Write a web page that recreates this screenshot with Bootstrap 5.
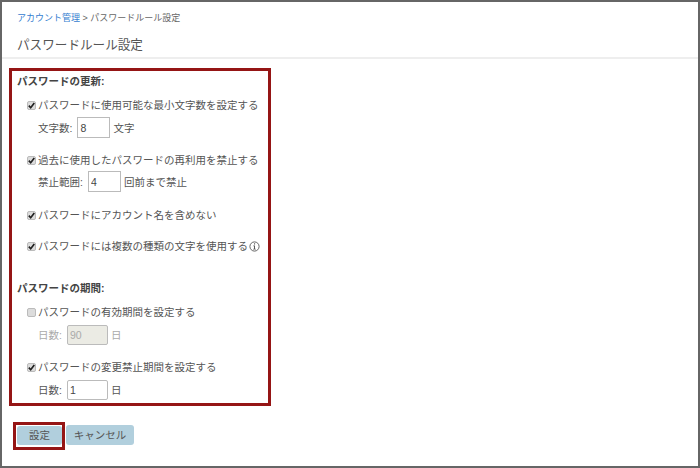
<!DOCTYPE html>
<html lang="ja">
<head>
<meta charset="utf-8">
<title>パスワードルール設定</title>
<link rel="stylesheet" href="https://cdn.jsdelivr.net/npm/bootstrap@5.3.0/dist/css/bootstrap.min.css">
<style>
html,body{height:100%;}
body{font-family:"Liberation Sans","Noto Sans CJK JP",sans-serif;font-size:10.5px;color:#555;background:#fff;}
.frame{height:468px;border:2px solid #666;overflow:hidden;background:#fff;}
.crumbs{padding:9px 0 0 15px;height:32px;font-size:9px;line-height:14px;color:#666;}
.crumbs a{color:#3580d0;text-decoration:none;}
.page-ttl{margin:0;padding:0 0 0 15px;height:23px;font-size:12.6px;line-height:22px;font-weight:400;color:#555;border-bottom:2px solid #eee;box-sizing:content-box;}
.rulebox{margin:9px 0 0 7px;width:262px;height:338px;border:3px solid #951515;padding:0 0 0 5px;}
.sect{margin:0;font-size:10.5px;font-weight:700;color:#444;line-height:14px;}
.s1{padding-top:3px;}
.s2{padding-top:27px;}
.chk{display:flex;align-items:center;height:16px;line-height:16px;margin-left:10px;}
.chk input{appearance:none;-webkit-appearance:none;width:9px;height:9px;margin:0 2px 0 0;flex:none;background:#dcdcdc center/9px 9px no-repeat;border:1px solid #bbb;border-radius:2px;}
.chk input:checked{background-image:url("data:image/svg+xml,%3Csvg xmlns='http://www.w3.org/2000/svg' viewBox='0 0 9 9'%3E%3Cpath d='M1.8 4.6l1.9 2.1 3.6-4.6' fill='none' stroke='%23222' stroke-width='1.7'/%3E%3C/svg%3E");}
.sub{display:flex;align-items:center;gap:3px;height:20px;margin:5px 0 0 21px;line-height:20px;}
.sub input{width:41px;height:20px;padding:0 0 0 2px;font-family:"Liberation Sans",sans-serif;font-size:10.5px;color:#444;border:1px solid #bbb;background:#fff;border-radius:2px;}
.sub input:disabled{background:#ebebe4;color:#aaa;}
.sub.off{color:#aaa;}
.sub.narrow{height:21px;margin-top:4px;}
.sub.narrow input{width:33px;height:21px;border-radius:0;}
.sub.narrow.mid{margin-top:3px;}
.labelgap{margin-right:2px;}
.g1{margin-top:9px;}
.g2{margin-top:14px;}
.g3{margin-top:15px;}
.g4{margin-top:15px;}
.g5{margin-top:9px;}
.g6{margin-top:14px;}
.info{flex:none;margin-left:1px;}
.actions{display:flex;align-items:flex-start;margin:16px 0 0 11px;height:28px;}
.hl{border:3px solid #951515;padding:0 0 0 1px;height:28px;width:52px;display:flex;}
.btn-plain{font-size:10.5px;line-height:1;padding:0;height:20px;border:0;border-radius:3px;background:#b1cfdd;color:#555;}
.hl .btn-plain{width:45px;height:19px;margin:1px 0 0 0;}
.cancel{width:68px;margin:3px 0 0 1px;}
</style>
</head>
<body>
<div class="frame">
  <div class="crumbs"><a href="#">アカウント管理</a> &gt;&nbsp;パスワードルール設定</div>
  <h1 class="page-ttl">パスワードルール設定</h1>
  <form>
    <div class="rulebox">
      <h2 class="sect s1">パスワードの更新:</h2>
      <div class="chk g1"><input type="checkbox" checked><span>パスワードに使用可能な最小文字数を設定する</span></div>
      <div class="sub narrow"><span class="labelgap">文字数:</span><input type="text" value="8"><span>文字</span></div>
      <div class="chk g2"><input type="checkbox" checked><span>過去に使用したパスワードの再利用を禁止する</span></div>
      <div class="sub narrow mid"><span class="labelgap">禁止範囲:</span><input type="text" value="4"><span>回前まで禁止</span></div>
      <div class="chk g3"><input type="checkbox" checked><span>パスワードにアカウント名を含めない</span></div>
      <div class="chk g4"><input type="checkbox" checked><span>パスワードには複数の種類の文字を使用する</span>
        <svg class="info" width="11" height="11" viewBox="0 0 11 11"><circle cx="5.5" cy="5.5" r="4.6" fill="none" stroke="#555" stroke-width=".9"/><rect x="5" y="2.3" width="1.1" height="1.2" fill="#555"/><path d="M4.3 4.6h1.7v3.2h.8v.7H4.2v-.7h.8V5.3h-.7z" fill="#555"/></svg>
      </div>
      <h2 class="sect s2">パスワードの期間:</h2>
      <div class="chk g5"><input type="checkbox"><span>パスワードの有効期間を設定する</span></div>
      <div class="sub off"><span class="labelgap">日数:</span><input type="text" value="90" disabled><span>日</span></div>
      <div class="chk g6"><input type="checkbox" checked><span>パスワードの変更禁止期間を設定する</span></div>
      <div class="sub"><span class="labelgap">日数:</span><input type="text" value="1"><span>日</span></div>
    </div>
    <div class="actions">
      <div class="hl"><button type="button" class="btn btn-plain">設定</button></div>
      <button type="button" class="btn btn-plain cancel">キャンセル</button>
    </div>
  </form>
</div>
<script src="https://cdn.jsdelivr.net/npm/bootstrap@5.3.0/dist/js/bootstrap.bundle.min.js"></script>
</body>
</html>
